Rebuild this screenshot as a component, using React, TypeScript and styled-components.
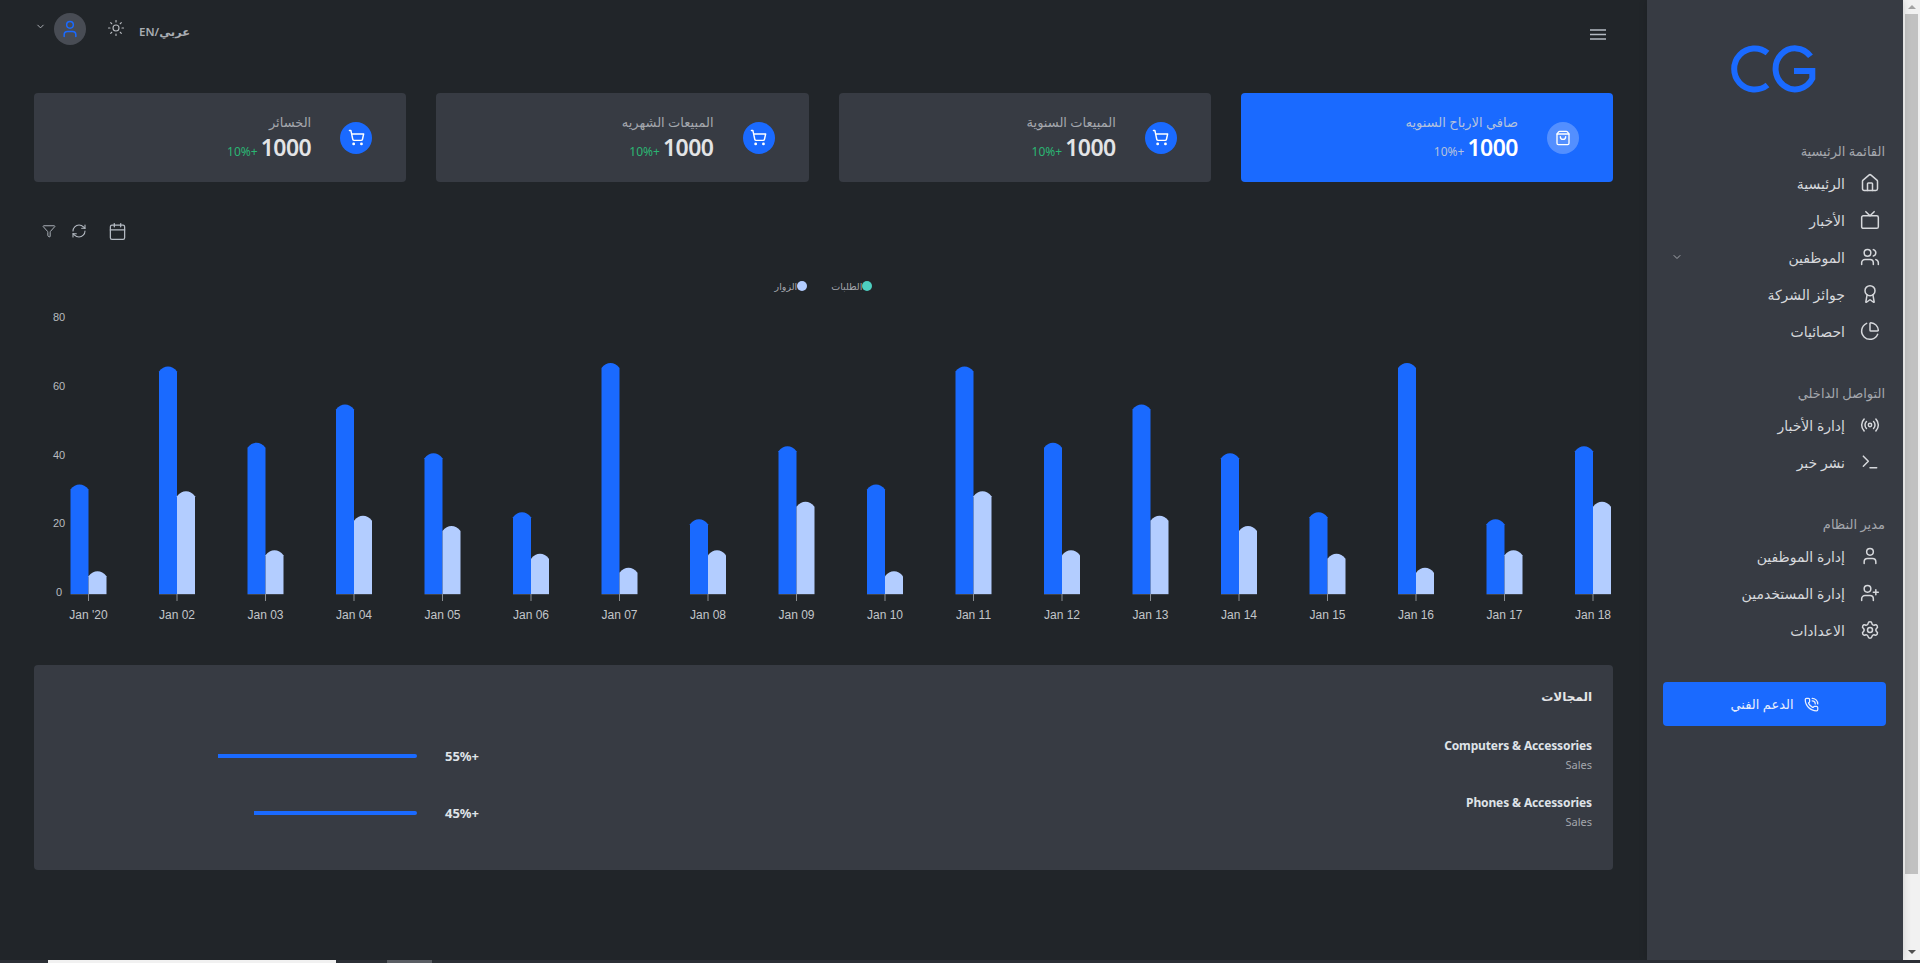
import React from 'react';
import styled, { createGlobalStyle } from 'styled-components';
import {
  ShoppingCart,
  ShoppingBag,
  Home,
  Tv,
  Users,
  Award,
  PieChart,
  Radio,
  Terminal,
  User,
  UserPlus,
  Settings,
  PhoneCall,
  ChevronDown,
  Sun,
  Filter,
  RefreshCw,
  Calendar,
} from 'lucide-react';

const GlobalStyle = createGlobalStyle`
  html, body {
    margin: 0;
    padding: 0;
    height: 100%;
    overflow: hidden;
    background: #212529;
  }
  * { box-sizing: border-box; }
`;

const fontStack = `"Noto Sans", "DejaVu Sans", "Liberation Sans", sans-serif`;

const Screen = styled.div`
  width: 1920px;
  height: 963px;
  display: flex;
  flex-direction: column;
  overflow: hidden;
  font-family: ${fontStack};
`;

const Row = styled.div`
  flex: 1;
  min-height: 0;
  display: flex;
  direction: rtl;
`;

const ScrollTrack = styled.div`
  width: 17px;
  flex: none;
  background: #f1f1f1;
  display: flex;
  flex-direction: column;
  align-items: center;
`;

const ScrollArrow = styled.div<{ $down?: boolean }>`
  width: 100%;
  height: ${({ $down }) => ($down ? '17px' : '14px')};
  flex: none;
  display: flex;
  align-items: center;
  justify-content: center;
  &::after {
    content: '';
    border-left: 4px solid transparent;
    border-right: 4px solid transparent;
    ${({ $down }) => ($down ? 'border-top: 4px solid #505050;' : 'border-bottom: 4px solid #a3a3a3;')}
  }
`;

const ScrollThumb = styled.div`
  width: 13px;
  flex: 1;
  background: #c1c1c1;
  margin-bottom: 69px;
`;

const Sidebar = styled.aside`
  width: 256px;
  flex: none;
  background: #373b43;
  padding: 45px 18px 0 6px;
  color: #d6d8dc;
  box-shadow: 0 0 8px rgba(0, 0, 0, 0.15);
`;

const LogoWrap = styled.div`
  display: flex;
  justify-content: center;
  margin: 0 0 49px 0;
  padding-left: 10px;
`;

const SectionTitle = styled.div`
  font-size: 13px;
  line-height: 18px;
  color: #a4a7ad;
  margin-bottom: 4px;
`;

const MenuList = styled.div`
  display: flex;
  flex-direction: column;
  margin-bottom: 35px;
`;

const MenuItem = styled.div`
  height: 37px;
  display: flex;
  align-items: center;
  gap: 15px;
  padding-right: 5px;
  font-size: 14px;
  font-weight: 500;
  color: #d6d8dc;
  white-space: nowrap;
`;

const MenuLabel = styled.span`
  margin-top: 2px;
`;

const MenuCaret = styled.span`
  margin-right: auto;
  display: flex;
  padding-left: 18px;
  color: #a4a7ad;
`;

const SupportButton = styled.button`
  width: 223px;
  height: 44px;
  margin-top: -1px;
  margin-right: -1px;
  border: 0;
  border-radius: 4px;
  background: #1a6aff;
  color: #e8eefc;
  font: 500 13px ${fontStack};
  display: flex;
  align-items: center;
  justify-content: center;
  gap: 10px;
`;

const Main = styled.main`
  flex: 1;
  min-width: 0;
  padding: 0 34px;
`;

const Topbar = styled.header`
  height: 93px;
  display: flex;
  justify-content: space-between;
  align-items: flex-start;
  padding-top: 13px;
`;

const MenuButton = styled.div`
  color: #b4bac2;
  display: flex;
  margin-right: 7px;
  padding-top: 16px;
`;

const TopActions = styled.div`
  display: flex;
  align-items: center;
  height: 32px;
  padding-left: 1px;
`;

const LangText = styled.span`
  font-size: 11.5px;
  font-weight: 600;
  color: #a9adb3;
  margin-left: 14px;
  margin-top: 5px;
`;

const ThemeIcon = styled.span`
  display: flex;
  color: #b6b9be;
  margin-left: 21px;
  margin-top: -2px;
`;

const Avatar = styled.span`
  width: 32px;
  height: 32px;
  border-radius: 50%;
  background: #484c54;
  color: #1a6aff;
  display: flex;
  align-items: center;
  justify-content: center;
  margin-left: 8px;
`;

const AvatarCaret = styled.span`
  display: flex;
  color: #b6b9be;
  margin-top: -6px;
`;

const Cards = styled.section`
  display: grid;
  grid-template-columns: repeat(4, 1fr);
  gap: 30px;
`;

const StatCard = styled.div<{ $primary?: boolean }>`
  height: 89px;
  border-radius: 4px;
  background: ${({ $primary }) => ($primary ? '#1a6aff' : '#373b43')};
  display: flex;
  align-items: center;
  gap: 29px;
  padding: 0 34px 0 16px;
`;

const StatIcon = styled.span<{ $primary?: boolean }>`
  width: 32px;
  height: 32px;
  flex: none;
  border-radius: 50%;
  background: ${({ $primary }) => ($primary ? 'rgba(255,255,255,0.25)' : '#1a6aff')};
  color: #fff;
  display: flex;
  align-items: center;
  justify-content: center;
`;

const StatBody = styled.div`
  display: flex;
  flex-direction: column;
  gap: 3px;
  padding-bottom: 2px;
`;

const StatLabel = styled.div<{ $primary?: boolean }>`
  font-size: 13px;
  line-height: 18px;
  color: ${({ $primary }) => ($primary ? '#b5c2dc' : '#a4a7ad')};
`;

const StatValueRow = styled.div`
  display: flex;
  align-items: baseline;
  gap: 3px;
`;

const StatValue = styled.span<{ $primary?: boolean }>`
  font-size: 23px;
  line-height: 26px;
  font-weight: 600;
  letter-spacing: -0.5px;
  color: ${({ $primary }) => ($primary ? '#fff' : '#e3e4e6')};
`;

const StatChange = styled.span<{ $primary?: boolean }>`
  font-size: 12px;
  color: ${({ $primary }) => ($primary ? '#b5c2dc' : '#2bb673')};
`;

const ChartTools = styled.div`
  display: flex;
  direction: ltr;
  align-items: center;
  color: #b4bac2;
  padding: 31px 0 0 8px;
  height: 67px;
`;

const ToolIcon = styled.span<{ $gap: number }>`
  display: flex;
  margin-right: ${({ $gap }) => $gap}px;
`;

const ChartWrap = styled.div`
  height: 416px;
  margin: 0 -34px;
`;

const Legend = styled.div`
  display: flex;
  justify-content: center;
  align-items: flex-start;
  gap: 24px;
  height: 44px;
  padding-top: 30px;
  font-size: 9.5px;
  color: #a4a7ad;
`;

const LegendItem = styled.span`
  display: flex;
  align-items: center;
  height: 14px;
`;

const LegendDot = styled.span<{ $color: string }>`
  width: 10px;
  height: 10px;
  border-radius: 50%;
  background: ${({ $color }) => $color};
`;

const ChartCanvas = styled.div`
  direction: ltr;
  display: flex;
`;

const DomainPanel = styled.section`
  height: 205px;
  background: #373b43;
  border-radius: 4px;
  padding: 22px 21px 0 0;
`;

const PanelTitle = styled.h3`
  margin: 0 0 31px;
  font-size: 12px;
  line-height: 20px;
  font-weight: 700;
  color: #e3e4e6;
`;

const DomainRow = styled.div`
  height: 57px;
  display: flex;
  justify-content: space-between;
`;

const DomainName = styled.div`
  font-size: 12px;
  line-height: 16px;
  font-weight: 700;
  letter-spacing: -0.13px;
  color: #dfe3e8;
  direction: ltr;
  text-align: right;
`;

const DomainSub = styled.div`
  font-size: 11px;
  line-height: 16px;
  margin-top: 3px;
  color: #a4a7ad;
  direction: ltr;
  text-align: right;
`;

const DomainStat = styled.div`
  width: 261px;
  margin-left: 184px;
  margin-top: 8px;
  height: 20px;
  display: flex;
  align-items: center;
  gap: 30px;
`;

const Percent = styled.span`
  font-size: 13px;
  font-weight: 700;
  color: #dfe3e8;
  width: 32px;
  flex: none;
  white-space: nowrap;
`;

const BarTrack = styled.div`
  flex: 1;
  height: 4px;
  display: flex;
`;

const BarFill = styled.div`
  height: 4px;
  background: #1a6aff;
  border-top-right-radius: 2px;
  border-bottom-right-radius: 2px;
`;

const BottomBar = styled.div`
  height: 3px;
  flex: none;
  background: #2b2f35;
  display: flex;
`;

const BottomThumb = styled.div<{ $left: number; $width: number; $color: string }>`
  margin-left: ${({ $left }) => $left}px;
  width: ${({ $width }) => $width}px;
  background: ${({ $color }) => $color};
`;

const blueValues = [31, 65, 43, 54, 40, 23, 66, 21, 42, 31, 65, 43, 54, 40, 23, 66, 21, 42];
const lightValues = [6, 29, 12, 22, 19, 11, 7, 12, 26, 6, 29, 12, 22, 19, 11, 7, 12, 26];
const labels = ["Jan '20", ...Array.from({ length: 17 }, (_, i) => `Jan ${String(i + 2).padStart(2, '0')}`)];

// chart svg starts 293px down the page, these are in svg coords
const BASE_Y = 301;
const UNIT = 3.47;
const START_X = 88.5;
const STEP = 88.5;
const BAR_W = 18;

const barPath = (x: number, value: number) => {
  const top = BASE_Y - value * UNIT - 2;
  return `M${x} ${BASE_Y}V${top + 5}C${x + 5} ${top - 1.67} ${x + BAR_W - 5} ${top - 1.67} ${x + BAR_W} ${top + 5}V${BASE_Y}Z`;
};

const SalesChart = () => (
  <svg width={1647} height={372} viewBox="0 0 1647 372">
    <g fontFamily={`"Liberation Sans", Arial, sans-serif`} fontSize={11} fill="#b8bbbf">
      {[80, 60, 40, 20, 0].map((v, i) => (
        <text key={v} x={59} y={28 + i * 68.75} textAnchor="middle">
          {v}
        </text>
      ))}
    </g>
    {labels.map((label, i) => {
      const cx = START_X + i * STEP;
      return (
        <g key={label}>
          <path d={barPath(cx - BAR_W, blueValues[i])} fill="#1a6aff" />
          <path d={barPath(cx, lightValues[i])} fill="#b3cdff" />
          <line x1={cx - BAR_W} x2={cx + BAR_W} y1={BASE_Y + 0.5} y2={BASE_Y + 0.5} stroke="#3f444c" />
          <line x1={cx} x2={cx} y1={BASE_Y} y2={BASE_Y + 7} stroke="#8a8d92" />
          <text
            x={cx}
            y={BASE_Y + 25}
            textAnchor="middle"
            fontFamily={`"Liberation Sans", Arial, sans-serif`}
            fontSize={12}
            fill="#c3c6ca"
          >
            {label}
          </text>
        </g>
      );
    })}
  </svg>
);

const stats = [
  { label: 'صافي الارباح السنويه', primary: true },
  { label: 'المبيعات السنوية' },
  { label: 'المبيعات الشهريه' },
  { label: 'الخسائر' },
];

const menuSections = [
  {
    title: 'القائمة الرئيسية',
    items: [
      { icon: Home, label: 'الرئيسية' },
      { icon: Tv, label: 'الأخبار' },
      { icon: Users, label: 'الموظفين', caret: true },
      { icon: Award, label: 'جوائز الشركة' },
      { icon: PieChart, label: 'احصائيات' },
    ],
  },
  {
    title: 'التواصل الداخلي',
    items: [
      { icon: Radio, label: 'إدارة الأخبار' },
      { icon: Terminal, label: 'نشر خبر' },
    ],
  },
  {
    title: 'مدير النظام',
    items: [
      { icon: User, label: 'إدارة الموظفين' },
      { icon: UserPlus, label: 'إدارة المستخدمين' },
      { icon: Settings, label: 'الاعدادات' },
    ],
  },
];

const domains = [
  { name: 'Computers & Accessories', percent: 55, width: 199 },
  { name: 'Phones & Accessories', percent: 45, width: 163 },
];

export default function App() {
  return (
    <Screen>
      <GlobalStyle />
      <Row>
        <ScrollTrack>
          <ScrollArrow />
          <ScrollThumb />
          <ScrollArrow $down />
        </ScrollTrack>
        <Sidebar>
          <LogoWrap>
            <svg width={86} height={48} viewBox="0 0 86 48" fill="none" stroke="#1a6aff" strokeWidth={6}>
              <path d="M36.5 8A20.5 20.5 0 1 0 36.5 40" />
              <path d="M79.5 11.3A19.5 20.5 0 1 0 81.3 33.5V26H63" />
            </svg>
          </LogoWrap>
          {menuSections.map((section) => (
            <div key={section.title}>
              <SectionTitle>{section.title}</SectionTitle>
              <MenuList>
                {section.items.map((item) => {
                  const Icon = item.icon;
                  return (
                    <MenuItem key={item.label}>
                      <Icon size={20} strokeWidth={1.8} />
                      <MenuLabel>{item.label}</MenuLabel>
                      {'caret' in item && (
                        <MenuCaret>
                          <ChevronDown size={12} />
                        </MenuCaret>
                      )}
                    </MenuItem>
                  );
                })}
              </MenuList>
            </div>
          ))}
          <SupportButton>
            <PhoneCall size={15} />
            الدعم الفني
          </SupportButton>
        </Sidebar>
        <Main>
          <Topbar>
            <MenuButton>
              <svg width={16} height={11} viewBox="0 0 16 11" stroke="currentColor" strokeWidth={1.6}>
                <path d="M0 1H16M0 5.5H16M0 10H16" />
              </svg>
            </MenuButton>
            <TopActions>
              <LangText>عربي/EN</LangText>
              <ThemeIcon>
                <Sun size={18} strokeWidth={1.5} />
              </ThemeIcon>
              <Avatar>
                <User size={20} strokeWidth={1.8} />
              </Avatar>
              <AvatarCaret>
                <ChevronDown size={11} />
              </AvatarCaret>
            </TopActions>
          </Topbar>
          <Cards>
            {stats.map((s) => (
              <StatCard key={s.label} $primary={s.primary}>
                <StatIcon $primary={s.primary}>
                  {s.primary ? <ShoppingBag size={16} /> : <ShoppingCart size={17} />}
                </StatIcon>
                <StatBody>
                  <StatLabel $primary={s.primary}>{s.label}</StatLabel>
                  <StatValueRow>
                    <StatValue $primary={s.primary}>1000</StatValue>
                    <StatChange $primary={s.primary}>+10%</StatChange>
                  </StatValueRow>
                </StatBody>
              </StatCard>
            ))}
          </Cards>
          <ChartTools>
            <ToolIcon $gap={15}>
              <Filter size={14} strokeWidth={1.6} />
            </ToolIcon>
            <ToolIcon $gap={21}>
              <RefreshCw size={16} strokeWidth={1.6} />
            </ToolIcon>
            <ToolIcon $gap={0}>
              <Calendar size={19} strokeWidth={1.6} />
            </ToolIcon>
          </ChartTools>
          <ChartWrap>
            <Legend>
              <LegendItem>
                <LegendDot $color="#4dcfc0" />
                الطلبات
              </LegendItem>
              <LegendItem>
                <LegendDot $color="#b3cdff" />
                الزوار
              </LegendItem>
            </Legend>
            <ChartCanvas>
              <SalesChart />
            </ChartCanvas>
          </ChartWrap>
          <DomainPanel>
            <PanelTitle>المجالات</PanelTitle>
            {domains.map((d) => (
              <DomainRow key={d.name}>
                <div>
                  <DomainName>{d.name}</DomainName>
                  <DomainSub>Sales</DomainSub>
                </div>
                <DomainStat>
                  <Percent>+{d.percent}%</Percent>
                  <BarTrack>
                    <BarFill style={{ width: d.width }} />
                  </BarTrack>
                </DomainStat>
              </DomainRow>
            ))}
          </DomainPanel>
        </Main>
      </Row>
      <BottomBar>
        <BottomThumb $left={48} $width={288} $color="#f1f1f1" />
        <BottomThumb $left={51} $width={45} $color="#5a5e64" />
      </BottomBar>
    </Screen>
  );
}
